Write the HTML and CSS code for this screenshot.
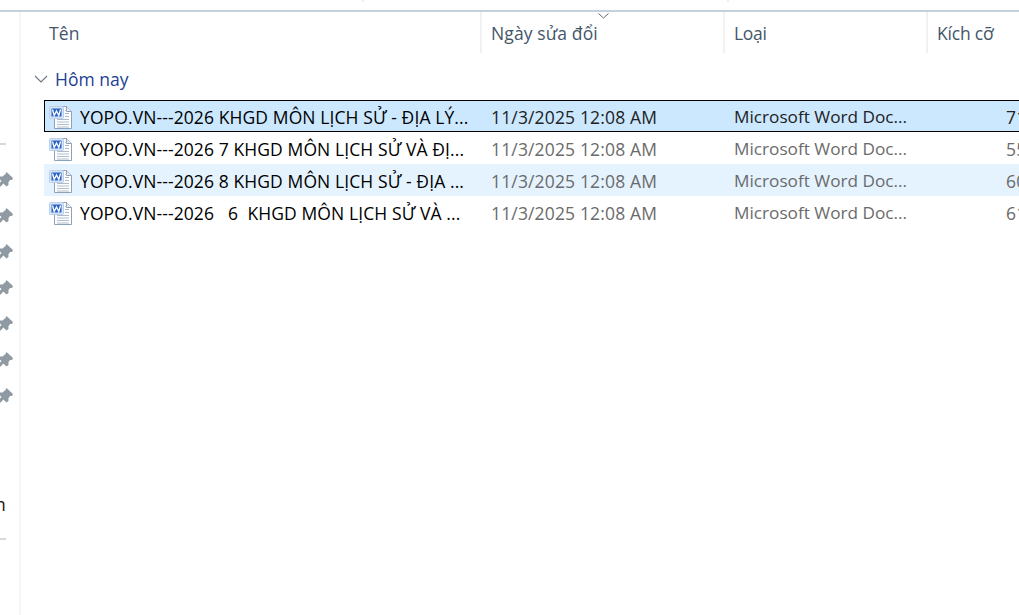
FILE: index.html
```html
<!DOCTYPE html>
<html lang="vi">
<head>
<meta charset="utf-8">
<title>Hôm nay</title>
<link rel="stylesheet" href="styles.css">
</head>
<body>
<svg class="defs" width="0" height="0" aria-hidden="true">
  <defs>
    <symbol id="word" viewBox="0 0 24 24">
      <path d="M5.5 1.5H17.5L22.5 6.5V23.5H5.5Z" fill="#fff" stroke="#8ea1b8"/>
      <path d="M17.5 1.5V6.5H22.5" fill="#e3ebf5" stroke="#8ea1b8"/>
      <path d="M8 14.5H20M8 17H20M8 19.5H20M8 22H20M16 5.5H18M16 8.5H20M16 11.5H20" stroke="#aebccd" fill="none"/>
      <rect x="0.5" y="1.5" width="14" height="12" rx="1" fill="#d5e4f6" stroke="#bcd0ea"/>
      <rect x="2.5" y="3.5" width="10" height="8" fill="#2a63c4"/>
      <path d="M3.5 4.5L5.2 10.5L7.5 6L9.8 10.5L11.5 4.5" fill="none" stroke="#fff" stroke-width="1.3"/>
    </symbol>
    <symbol id="pin" viewBox="0 0 15 15">
      <path d="M8.5 0L15 6L14 8L12 8L10.5 10L10.5 13L8.5 14.5L5.5 11.5L2 15L0 15L0 12.5L3.5 9L.5 6L1.5 4.5L4.5 4.5L7.5 2Z" fill="#8f9aa3"/>
    </symbol>
  </defs>
</svg>
<div class="window">
  <div class="topbar"><span class="tick"></span><span class="tick"></span></div>
  <div class="main">
    <aside class="nav">
      <div class="nav-rule nav-rule-top"></div>
      <ul class="pins">
        <li><svg class="pin"><use href="#pin"/></svg></li>
        <li><svg class="pin"><use href="#pin"/></svg></li>
        <li><svg class="pin"><use href="#pin"/></svg></li>
        <li><svg class="pin"><use href="#pin"/></svg></li>
        <li><svg class="pin"><use href="#pin"/></svg></li>
        <li><svg class="pin"><use href="#pin"/></svg></li>
        <li><svg class="pin"><use href="#pin"/></svg></li>
      </ul>
      <div class="nav-letter">n</div>
      <div class="nav-rule"></div>
    </aside>
    <section class="content">
      <header class="cols">
        <div class="col col-name">Tên</div>
        <div class="col col-date">Ngày sửa đổi<svg class="sort" viewBox="0 0 11 6"><path d="M.5 .5L5.5 5L10.5 .5" fill="none" stroke="#5f6b78"/></svg></div>
        <div class="col col-type">Loại</div>
        <div class="col col-size">Kích cỡ</div>
      </header>
      <div class="group"><svg class="chev" viewBox="0 0 14 8"><path d="M1 1L7 7L13 1" fill="none" stroke="#6b7480" stroke-width="1.1"/></svg><span>Hôm nay</span></div>
      <div class="rows">
        <div class="row selected">
          <div class="name"><svg class="doc"><use href="#word"/></svg><span class="label">YOPO.VN---2026 KHGD MÔN LỊCH SỬ - ĐỊA LÝ...</span></div>
          <div class="date">11/3/2025 12:08 AM</div><div class="type">Microsoft Word Doc...</div><div class="size">71</div>
        </div>
        <div class="row">
          <div class="name"><svg class="doc"><use href="#word"/></svg><span class="label">YOPO.VN---2026 7 KHGD MÔN LỊCH SỬ VÀ ĐỊ...</span></div>
          <div class="date">11/3/2025 12:08 AM</div><div class="type">Microsoft Word Doc...</div><div class="size">55</div>
        </div>
        <div class="row hover">
          <div class="name"><svg class="doc"><use href="#word"/></svg><span class="label">YOPO.VN---2026 8 KHGD MÔN LỊCH SỬ - ĐỊA ...</span></div>
          <div class="date">11/3/2025 12:08 AM</div><div class="type">Microsoft Word Doc...</div><div class="size">60</div>
        </div>
        <div class="row">
          <div class="name"><svg class="doc"><use href="#word"/></svg><span class="label">YOPO.VN---2026&nbsp;&nbsp; 6&nbsp; KHGD MÔN LỊCH SỬ VÀ ...</span></div>
          <div class="date">11/3/2025 12:08 AM</div><div class="type">Microsoft Word Doc...</div><div class="size">61</div>
        </div>
      </div>
    </section>
  </div>
</div>
</body>
</html>
```
FILE: styles.css
```css
* { box-sizing: border-box; }
html, body { margin: 0; padding: 0; background: #fff; }
body { width: 1019px; height: 615px; overflow: hidden; font-family: "Open Sans", "Noto Sans", "Liberation Sans", sans-serif; font-size: 17.5px; }
.defs { display: block; height: 0; }
.window { width: 1019px; height: 615px; display: flex; flex-direction: column; overflow: hidden; }
.topbar { height: 12px; flex: none; border-bottom: 2px solid #c3d0de; display: flex; align-items: flex-start; padding-left: 362px; gap: 363px; }
.tick { width: 2px; height: 2px; background: #eeeeee; flex: none; }
.main { flex: 1; display: flex; min-height: 0; }
.nav { width: 21px; flex: none; border-right: 2px solid #f5f5f5; display: flex; flex-direction: column; overflow: hidden; }
.nav-rule { width: 6px; height: 2px; background: #d9d9d9; flex: none; }
.nav-rule-top { margin-top: 131px; }
.pins { list-style: none; margin: 27px 0 0; padding: 0; display: flex; flex-direction: column; gap: 21px; }
.pins li { height: 15px; margin-left: -2px; }
.pin { display: block; width: 15px; height: 15px; }
.nav-letter { margin-top: 90px; margin-left: -5px; height: 45px; line-height: 22px; color: #111; }
.content { flex: 1; min-width: 0; overflow: hidden; }
.cols { display: flex; height: 41px; padding-left: 18px; color: #44566a; letter-spacing: .1px; }
.col { height: 41px; padding: 9px 0 0 9px; line-height: 24px; border-right: 2px solid #f1f1f1; position: relative; flex: none; }
.col-name { width: 443px; padding-left: 10px; }
.col-date { width: 243px; }
.col-type { width: 203px; letter-spacing: -.3px; }
.col-size { width: 92px; border: 0; letter-spacing: -.2px; }
.sort { position: absolute; left: 116px; top: 1px; width: 11px; height: 6px; }
.group { display: flex; align-items: center; height: 24px; margin-top: 14px; padding-left: 13px; color: #1c3f94; }
.chev { width: 14px; height: 8px; margin-right: 7px; flex: none; }
.rows { margin: 9px -20px 0 23px; }
.row { display: flex; height: 32px; align-items: center; line-height: 24px; color: #6b6b6b; white-space: nowrap; padding-top: 1px; }
.row.selected { background: #cce8ff; color: #222; outline: 1px solid #000; outline-offset: -1px; }
.row.hover { background: #e5f3ff; }
.name { width: 447px; display: flex; align-items: center; padding-left: 5px; color: #000; flex: none; letter-spacing: .1px; }
.doc { width: 24px; height: 24px; margin-right: 7px; flex: none; }
.label { display: block; }
.date { width: 243px; flex: none; letter-spacing: .15px; }
.type { width: 272px; flex: none; font-size: 17.2px; }
.size { flex: none; letter-spacing: .2px; }
```
